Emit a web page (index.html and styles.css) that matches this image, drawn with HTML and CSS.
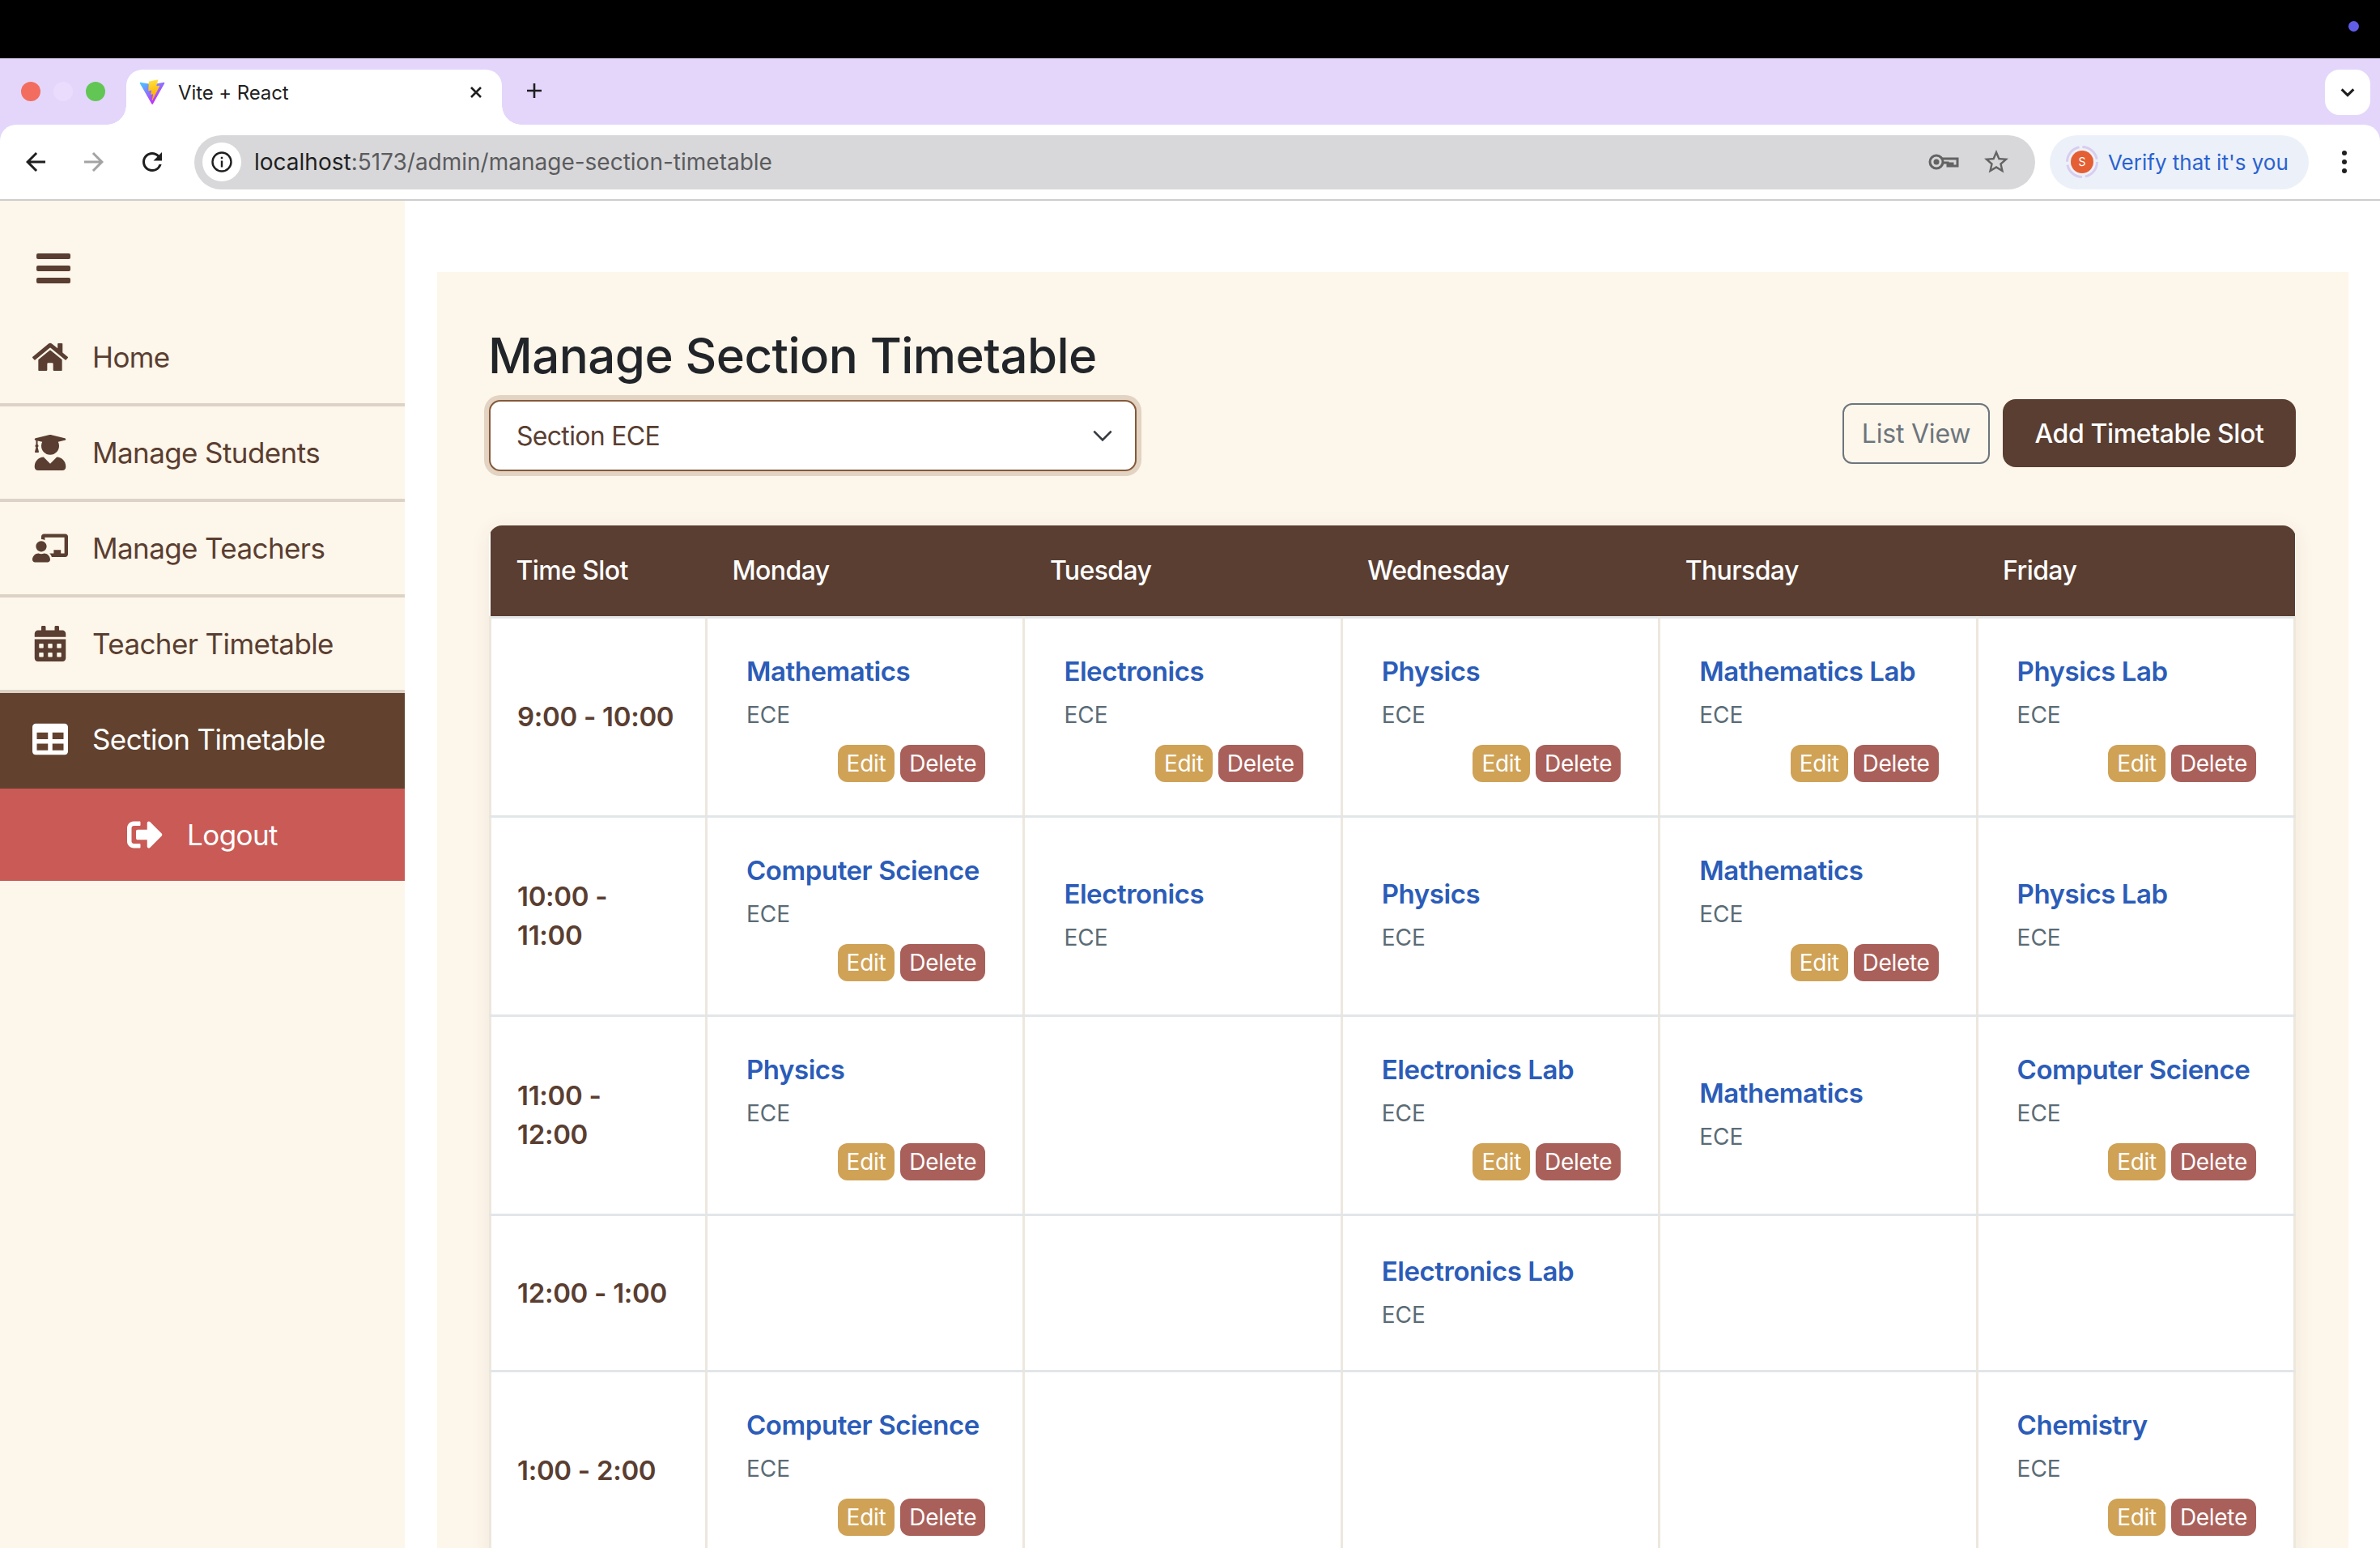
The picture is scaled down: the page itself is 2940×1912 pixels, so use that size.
FILE: index.html
```html
<!DOCTYPE html>
<html lang="en">

<head>
  <meta charset="UTF-8">
  <title>Vite + React</title>
  <link rel="stylesheet" href="styles.css">
</head>

<body>
  <div class="notch-bar"><span class="notch-dot"></span></div>

  <header class="browser">
    <div class="tab-strip">
      <div class="lights">
        <span class="light red"></span>
        <span class="light idle"></span>
        <span class="light green"></span>
      </div>
      <div class="tab">
        <svg class="tab-logo" viewBox="0 0 410 404">
          <defs>
            <linearGradient id="viteA" x1="6" y1="33" x2="235" y2="344" gradientUnits="userSpaceOnUse">
              <stop stop-color="#41D1FF" />
              <stop offset="1" stop-color="#BD34FE" />
            </linearGradient>
            <linearGradient id="viteB" x1="194.65" y1="8.81" x2="236.07" y2="292.99" gradientUnits="userSpaceOnUse">
              <stop stop-color="#FFEA83" />
              <stop offset="0.08" stop-color="#FFDD35" />
              <stop offset="1" stop-color="#FFA800" />
            </linearGradient>
          </defs>
          <path fill="url(#viteA)" d="M399.641 59.5246L215.643 388.545C211.844 395.338 202.084 395.378 198.228 388.618L10.5817 59.5563C6.38087 52.1896 12.6802 43.2665 21.0281 44.7586L205.223 77.6824C206.398 77.8924 207.601 77.8904 208.776 77.6763L389.119 44.8058C397.439 43.2894 403.768 52.1434 399.641 59.5246Z" />
          <path fill="url(#viteB)" d="M292.965 1.5744L156.801 28.2552C154.563 28.6937 152.906 30.5903 152.771 32.8664L144.395 174.33C144.198 177.662 147.258 180.248 150.51 179.498L188.42 170.749C191.967 169.931 195.172 173.055 194.443 176.622L183.18 231.775C182.422 235.487 185.907 238.661 189.532 237.56L212.947 230.446C216.577 229.344 220.065 232.527 219.297 236.242L201.398 322.875C200.278 328.294 207.486 331.249 210.492 326.603L212.5 323.5L323.454 102.072C325.312 98.3645 322.108 94.137 318.036 94.9228L279.014 102.454C275.347 103.161 272.227 99.746 273.262 96.1583L298.731 7.86689C299.767 4.27314 296.636 0.855181 292.965 1.5744Z" />
        </svg>
        <span class="tab-title">Vite + React</span>
        <svg class="tab-close" viewBox="0 0 20 20">
          <path d="M4 4l12 12M16 4L4 16" />
        </svg>
      </div>
      <svg class="new-tab" viewBox="0 0 24 24">
        <path d="M12 3v18M3 12h18" />
      </svg>
      <div class="tab-search">
        <svg viewBox="0 0 24 24">
          <path d="M4 8l8 8 8-8" />
        </svg>
      </div>
    </div>

    <div class="toolbar">
      <svg class="nav-icon" viewBox="0 0 24 24">
        <path d="M20 11H7.83l5.59-5.59L12 4l-8 8 8 8 1.41-1.41L7.83 13H20v-2z" />
      </svg>
      <svg class="nav-icon off" viewBox="0 0 24 24">
        <path d="M4 11h12.17l-5.59-5.59L12 4l8 8-8 8-1.41-1.41L16.17 13H4v-2z" />
      </svg>
      <svg class="nav-icon" viewBox="0 0 24 24">
        <path d="M17.65 6.35A7.958 7.958 0 0 0 12 4c-4.42 0-7.99 3.58-7.99 8s3.57 8 7.99 8c3.73 0 6.84-2.55 7.73-6h-2.08A5.99 5.99 0 0 1 12 18c-3.31 0-6-2.69-6-6s2.69-6 6-6c1.66 0 3.14.69 4.22 1.78L13 11h7V4l-2.35 2.35z" />
      </svg>

      <div class="omnibox">
        <span class="site-info">
          <svg viewBox="0 0 28 28">
            <circle class="ring" cx="14" cy="14" r="11.5" />
            <path class="mark" d="M12.8 12.4h2.4v8h-2.4zM12.8 7.8h2.4v2.4h-2.4z" />
          </svg>
        </span>
        <span class="url"><b>localhost</b>:5173/admin/manage-section-timetable</span>
        <svg class="key" viewBox="0 0 38 22">
          <circle class="key-ring" cx="10" cy="11" r="8" />
          <circle class="key-hole" cx="10" cy="11" r="3.5" />
          <path class="key-ring" d="M17 7h19v9h-6v-3h-3v3h-3v-4h-7" />
        </svg>
        <svg class="star" viewBox="0 0 24 24">
          <path d="M22 9.24l-7.19-.62L12 2 9.19 8.63 2 9.24l5.46 4.73L5.82 21 12 17.27 18.18 21l-1.63-7.03L22 9.24zM12 15.4l-3.76 2.27 1-4.28-3.32-2.88 4.38-.38L12 6.1l1.71 4.04 4.38.38-3.32 2.88 1 4.28L12 15.4z" />
        </svg>
      </div>

      <div class="verify">
        <svg class="avatar" viewBox="0 0 40 40">
          <circle class="avatar-ring" cx="20" cy="20" r="18.5" />
          <circle class="avatar-fill" cx="20" cy="20" r="14" />
          <text class="avatar-letter" x="20" y="25">S</text>
        </svg>
        <span>Verify that it's you</span>
      </div>

      <div class="kebab"><span></span><span></span><span></span></div>
    </div>
  </header>

  <div class="app">
    <aside class="sidebar">
      <div class="burger"><span></span><span></span><span></span></div>

      <nav>
        <a class="nav-item">
          <svg viewBox="0 0 576 512">
            <path d="M280.37 148.26L96 300.11V464a16 16 0 0 0 16 16l112.06-.29a16 16 0 0 0 15.92-16V368a16 16 0 0 1 16-16h64a16 16 0 0 1 16 16v95.64a16 16 0 0 0 16 16.05L464 480a16 16 0 0 0 16-16V300L295.67 148.26a12.19 12.19 0 0 0-15.3 0zM571.6 251.47L488 182.56V44.05a12 12 0 0 0-12-12h-56a12 12 0 0 0-12 12v72.61L318.47 43a48 48 0 0 0-61 0L4.34 251.47a12 12 0 0 0-1.6 16.9l25.5 31A12 12 0 0 0 45.15 301l235.22-193.74a12.19 12.19 0 0 1 15.3 0L530.9 301a12 12 0 0 0 16.9-1.6l25.5-31a12 12 0 0 0-1.7-16.93z" />
          </svg>
          <span>Home</span>
        </a>
        <a class="nav-item">
          <svg viewBox="0 0 448 512">
            <path d="M319.4 320.6L224 416l-95.4-95.4C57.1 323.7 0 382.2 0 454.4v9.6c0 26.5 21.5 48 48 48h352c26.5 0 48-21.5 48-48v-9.6c0-72.2-57.1-130.7-128.6-133.8zM13.6 79.8l6.4 1.5v58.4c-7 4.2-12 11.5-12 20.3 0 8.4 4.6 15.4 11.1 19.7L3.5 242c-1.7 6.9 2.1 14 7.6 14h41.8c5.5 0 9.3-7.1 7.6-14l-15.6-62.3C51.4 175.4 56 168.4 56 160c0-8.8-5-16.1-12-20.3V87.1l66 15.9c-8.6 17.2-14 36.4-14 57 0 70.7 57.3 128 128 128s128-57.3 128-128c0-20.6-5.3-39.8-14-57l96.3-23.2c18.2-4.4 18.2-27.1 0-31.5l-190.4-46c-13-3.1-26.7-3.1-39.7 0L13.6 48.2c-18.1 4.4-18.1 27.2 0 31.6z" />
          </svg>
          <span>Manage Students</span>
        </a>
        <a class="nav-item">
          <svg viewBox="0 0 640 512">
            <path d="M208 352c-2.39 0-4.78.35-7.06 1.09C187.98 357.3 174.35 360 160 360c-14.35 0-27.98-2.7-40.95-6.91-2.28-.74-4.66-1.09-7.05-1.09C49.94 352-.33 402.48 0 464.62.14 490.88 21.73 512 48 512h224c26.27 0 47.86-21.12 48-47.38.33-62.14-49.94-112.62-112-112.62zm-48-32c53.02 0 96-42.98 96-96s-42.98-96-96-96-96 42.98-96 96 42.98 96 96 96zM592 0H208c-26.47 0-48 22.25-48 49.59V96c23.42 0 45.1 6.78 64 17.8V64h352v288h-64v-64H384v64h-76.24c19.1 16.69 33.12 38.73 39.69 64H592c26.47 0 48-22.25 48-49.59V49.59C640 22.25 618.47 0 592 0z" />
          </svg>
          <span>Manage Teachers</span>
        </a>
        <a class="nav-item">
          <svg viewBox="0 0 448 512">
            <path d="M0 464c0 26.5 21.5 48 48 48h352c26.5 0 48-21.5 48-48V192H0v272zm320-196c0-6.6 5.4-12 12-12h40c6.6 0 12 5.4 12 12v40c0 6.6-5.4 12-12 12h-40c-6.6 0-12-5.4-12-12v-40zm0 128c0-6.6 5.4-12 12-12h40c6.6 0 12 5.4 12 12v40c0 6.6-5.4 12-12 12h-40c-6.6 0-12-5.4-12-12v-40zM192 268c0-6.6 5.4-12 12-12h40c6.6 0 12 5.4 12 12v40c0 6.6-5.4 12-12 12h-40c-6.6 0-12-5.4-12-12v-40zm0 128c0-6.6 5.4-12 12-12h40c6.6 0 12 5.4 12 12v40c0 6.6-5.4 12-12 12h-40c-6.6 0-12-5.4-12-12v-40zM64 268c0-6.6 5.4-12 12-12h40c6.6 0 12 5.4 12 12v40c0 6.6-5.4 12-12 12H76c-6.6 0-12-5.4-12-12v-40zm0 128c0-6.6 5.4-12 12-12h40c6.6 0 12 5.4 12 12v40c0 6.6-5.4 12-12 12H76c-6.6 0-12-5.4-12-12v-40zM400 64h-48V16c0-8.8-7.2-16-16-16h-32c-8.8 0-16 7.2-16 16v48H160V16c0-8.8-7.2-16-16-16h-32c-8.8 0-16 7.2-16 16v48H48C21.5 64 0 85.5 0 112v48h448v-48c0-26.5-21.5-48-48-48z" />
          </svg>
          <span>Teacher Timetable</span>
        </a>
        <a class="nav-item active">
          <svg viewBox="0 0 512 512">
            <path d="M464 32H48C21.49 32 0 53.49 0 80v352c0 26.51 21.49 48 48 48h416c26.51 0 48-21.49 48-48V80c0-26.51-21.49-48-48-48zM224 416H64v-96h160v96zm0-160H64v-96h160v96zm224 160H288v-96h160v96zm0-160H288v-96h160v96z" />
          </svg>
          <span>Section Timetable</span>
        </a>
      </nav>

      <a class="logout">
        <svg viewBox="0 0 512 512">
          <path d="M497 273L329 441c-15 15-41 4.5-41-17v-96H152c-13.3 0-24-10.7-24-24v-96c0-13.3 10.7-24 24-24h136V88c0-21.4 25.9-32 41-17l168 168c9.3 9.4 9.3 24.6 0 34zM192 436v-40c0-6.6-5.4-12-12-12H96c-17.7 0-32-14.3-32-32V160c0-17.7 14.3-32 32-32h84c6.6 0 12-5.4 12-12V76c0-6.6-5.4-12-12-12H96c-53 0-96 43-96 96v192c0 53 43 96 96 96h84c6.6 0 12-5.4 12-12z" />
        </svg>
        <span>Logout</span>
      </a>
    </aside>

    <main class="content">
      <section class="panel">
        <h1>Manage Section Timetable</h1>

        <div class="controls">
          <div class="select-wrap">
            <select class="section-select">
              <option>Section ECE</option>
            </select>
            <svg class="select-arrow" viewBox="0 0 24 24">
              <path d="M4 8l8 8 8-8" />
            </svg>
          </div>
          <div class="control-btns">
            <button class="btn-list">List View</button>
            <button class="btn-add">Add Timetable Slot</button>
          </div>
        </div>

        <div class="table-wrap">
          <table class="timetable">
            <thead>
              <tr>
                <th class="time-col">Time Slot</th>
                <th>Monday</th>
                <th>Tuesday</th>
                <th>Wednesday</th>
                <th>Thursday</th>
                <th>Friday</th>
              </tr>
            </thead>
            <tbody>
              <tr>
                <td class="time">9:00 - 10:00</td>
                <td>
                  <div class="slot">
                    <div class="subject">Mathematics</div>
                    <div class="section">ECE</div>
                    <div class="actions"><button class="btn-edit">Edit</button><button class="btn-delete">Delete</button></div>
                  </div>
                </td>
                <td>
                  <div class="slot">
                    <div class="subject">Electronics</div>
                    <div class="section">ECE</div>
                    <div class="actions"><button class="btn-edit">Edit</button><button class="btn-delete">Delete</button></div>
                  </div>
                </td>
                <td>
                  <div class="slot">
                    <div class="subject">Physics</div>
                    <div class="section">ECE</div>
                    <div class="actions"><button class="btn-edit">Edit</button><button class="btn-delete">Delete</button></div>
                  </div>
                </td>
                <td>
                  <div class="slot">
                    <div class="subject">Mathematics Lab</div>
                    <div class="section">ECE</div>
                    <div class="actions"><button class="btn-edit">Edit</button><button class="btn-delete">Delete</button></div>
                  </div>
                </td>
                <td>
                  <div class="slot">
                    <div class="subject">Physics Lab</div>
                    <div class="section">ECE</div>
                    <div class="actions"><button class="btn-edit">Edit</button><button class="btn-delete">Delete</button></div>
                  </div>
                </td>
              </tr>
              <tr>
                <td class="time">10:00 - 11:00</td>
                <td>
                  <div class="slot">
                    <div class="subject">Computer Science</div>
                    <div class="section">ECE</div>
                    <div class="actions"><button class="btn-edit">Edit</button><button class="btn-delete">Delete</button></div>
                  </div>
                </td>
                <td>
                  <div class="slot">
                    <div class="subject">Electronics</div>
                    <div class="section">ECE</div>
                  </div>
                </td>
                <td>
                  <div class="slot">
                    <div class="subject">Physics</div>
                    <div class="section">ECE</div>
                  </div>
                </td>
                <td>
                  <div class="slot">
                    <div class="subject">Mathematics</div>
                    <div class="section">ECE</div>
                    <div class="actions"><button class="btn-edit">Edit</button><button class="btn-delete">Delete</button></div>
                  </div>
                </td>
                <td>
                  <div class="slot">
                    <div class="subject">Physics Lab</div>
                    <div class="section">ECE</div>
                  </div>
                </td>
              </tr>
              <tr>
                <td class="time">11:00 - 12:00</td>
                <td>
                  <div class="slot">
                    <div class="subject">Physics</div>
                    <div class="section">ECE</div>
                    <div class="actions"><button class="btn-edit">Edit</button><button class="btn-delete">Delete</button></div>
                  </div>
                </td>
                <td></td>
                <td>
                  <div class="slot">
                    <div class="subject">Electronics Lab</div>
                    <div class="section">ECE</div>
                    <div class="actions"><button class="btn-edit">Edit</button><button class="btn-delete">Delete</button></div>
                  </div>
                </td>
                <td>
                  <div class="slot">
                    <div class="subject">Mathematics</div>
                    <div class="section">ECE</div>
                  </div>
                </td>
                <td>
                  <div class="slot">
                    <div class="subject">Computer Science</div>
                    <div class="section">ECE</div>
                    <div class="actions"><button class="btn-edit">Edit</button><button class="btn-delete">Delete</button></div>
                  </div>
                </td>
              </tr>
              <tr>
                <td class="time">12:00 - 1:00</td>
                <td></td>
                <td></td>
                <td>
                  <div class="slot">
                    <div class="subject">Electronics Lab</div>
                    <div class="section">ECE</div>
                  </div>
                </td>
                <td></td>
                <td></td>
              </tr>
              <tr>
                <td class="time">1:00 - 2:00</td>
                <td>
                  <div class="slot">
                    <div class="subject">Computer Science</div>
                    <div class="section">ECE</div>
                    <div class="actions"><button class="btn-edit">Edit</button><button class="btn-delete">Delete</button></div>
                  </div>
                </td>
                <td></td>
                <td></td>
                <td></td>
                <td>
                  <div class="slot">
                    <div class="subject">Chemistry</div>
                    <div class="section">ECE</div>
                    <div class="actions"><button class="btn-edit">Edit</button><button class="btn-delete">Delete</button></div>
                  </div>
                </td>
              </tr>
            </tbody>
          </table>
        </div>
      </section>
    </main>
  </div>
</body>

</html>
```

FILE: styles.css
```css
* {
  box-sizing: border-box;
}

html,
body {
  height: 1912px;
  margin: 0;
  overflow: hidden;
}

body {
  font-family: 'Inter', 'Liberation Sans', sans-serif;
  background-color: #ffffff;
  color: #5a3e31;
}

/* top of the screen */
.notch-bar {
  display: flex;
  justify-content: flex-end;
  height: 72px;
  padding: 26px 26px 0 0;
  background-color: #000000;
}

.notch-dot {
  width: 13px;
  height: 13px;
  border-radius: 50%;
  background-color: #625de8;
}

/* browser */
.browser {
  background-color: #e4d6fb;
}

.tab-strip {
  display: flex;
  align-items: flex-start;
  height: 82px;
  padding-top: 14px;
}

.lights {
  display: flex;
  gap: 16px;
  width: 156px;
  padding: 15px 0 0 26px;
}

.light {
  width: 24px;
  height: 24px;
  border-radius: 50%;
}

.red {
  background-color: #f26d60;
}

.idle {
  background-color: #e9dcfc;
}

.green {
  background-color: #62c655;
}

.tab {
  position: relative;
  display: flex;
  align-items: center;
  width: 464px;
  height: 68px;
  padding: 0 22px 12px 16px;
  border-radius: 20px 20px 0 0;
  background-color: #ffffff;
}

.tab::before,
.tab::after {
  content: '';
  position: absolute;
  bottom: 0;
  width: 24px;
  height: 24px;
}

.tab::before {
  left: -24px;
  background: radial-gradient(circle at 0 0, transparent 23.5px, #ffffff 24px);
}

.tab::after {
  right: -24px;
  background: radial-gradient(circle at 100% 0, transparent 23.5px, #ffffff 24px);
}

.tab-logo {
  width: 32px;
  height: 32px;
  margin-right: 16px;
}

.tab-title {
  flex-grow: 1;
  font-size: 24px;
  letter-spacing: -0.1px;
  color: #1f1f1f;
}

.tab-close {
  width: 20px;
  height: 20px;
  fill: none;
  stroke: #1f1f1f;
  stroke-width: 2.6;
}

.new-tab {
  width: 24px;
  height: 24px;
  margin: 14px 0 0 28px;
  fill: none;
  stroke: #1f1f1f;
  stroke-width: 2.6;
}

.tab-search {
  display: flex;
  align-items: center;
  justify-content: center;
  width: 56px;
  height: 56px;
  margin: 0 12px 0 auto;
  border-radius: 18px;
  background-color: #ffffff;
}

.tab-search svg {
  width: 22px;
  height: 22px;
  fill: none;
  stroke: #1f1f1f;
  stroke-width: 3.4;
}

.toolbar {
  display: flex;
  align-items: center;
  height: 94px;
  padding: 0 0 0 26px;
  border-radius: 20px 20px 0 0;
  border-bottom: 2px solid #cdcdcd;
  background-color: #ffffff;
}

.nav-icon {
  width: 36px;
  height: 36px;
  margin-right: 36px;
  fill: #1f1f1f;
}

.nav-icon.off {
  fill: #a3a3a3;
}

.omnibox {
  display: flex;
  align-items: center;
  width: 2274px;
  height: 67px;
  margin-left: -2px;
  padding: 0 30px 0 10px;
  border-radius: 34px;
  background-color: #d8d8da;
}

.site-info {
  display: flex;
  align-items: center;
  justify-content: center;
  width: 48px;
  height: 48px;
  border-radius: 50%;
  background-color: #ffffff;
}

.site-info svg {
  width: 28px;
  height: 28px;
}

.ring {
  fill: none;
  stroke: #1f1f1f;
  stroke-width: 2.4;
}

.mark {
  fill: #1f1f1f;
}

.url {
  flex-grow: 1;
  margin-left: 16px;
  font-size: 28px;
  color: #5b5b5e;
}

.url b {
  font-weight: 400;
  color: #1f1f1f;
}

.key {
  width: 38px;
  height: 22px;
  margin-right: 28px;
}

.key-ring {
  fill: none;
  stroke: #636363;
  stroke-width: 3;
}

.key-hole {
  fill: #636363;
}

.star {
  width: 36px;
  height: 36px;
  fill: #636363;
}

.verify {
  display: flex;
  align-items: center;
  width: 320px;
  height: 67px;
  margin-left: 18px;
  padding-left: 20px;
  border-radius: 34px;
  font-size: 26px;
  color: #2a62d0;
  background-color: #ecf1f9;
}

.avatar {
  width: 40px;
  height: 40px;
  margin-right: 12px;
}

.avatar-ring {
  fill: none;
  stroke: #d8cdf0;
  stroke-width: 3;
  stroke-dasharray: 25 4;
}

.avatar-fill {
  fill: #e45f33;
}

.avatar-letter {
  font-size: 14px;
  text-anchor: middle;
  fill: #ffffff;
}

.kebab {
  display: flex;
  flex-direction: column;
  gap: 5px;
  margin-left: 41px;
}

.kebab span {
  width: 6px;
  height: 6px;
  border-radius: 50%;
  background-color: #1f1f1f;
}

/* app */
.app {
  display: flex;
  height: 1664px;
  overflow: hidden;
}

.sidebar {
  flex: 0 0 500px;
  background-color: #fdf6ea;
}

.burger {
  display: flex;
  flex-direction: column;
  gap: 8px;
  height: 136px;
  padding: 65px 0 0 45px;
}

.burger span {
  width: 42px;
  height: 7px;
  border-radius: 2px;
  background-color: #5a3e31;
}

.nav-item {
  display: flex;
  align-items: center;
  height: 118px;
  padding-left: 40px;
  border-bottom: 4px solid #ddd2c6;
  font-size: 35px;
  letter-spacing: -0.6px;
  color: #5a3e31;
}

.nav-item svg {
  flex-shrink: 0;
  width: 44px;
  height: 44px;
  margin-right: 30px;
  fill: #5a3e31;
}

.nav-item.active {
  padding-bottom: 4px;
  border-bottom: 0;
  color: #ffffff;
  background-color: #62422e;
}

.nav-item.active svg {
  fill: #ffffff;
}

.logout {
  display: flex;
  align-items: center;
  justify-content: center;
  gap: 30px;
  height: 114px;
  font-size: 35px;
  letter-spacing: -0.6px;
  color: #ffffff;
  background-color: #c95a55;
}

.logout svg {
  width: 44px;
  height: 44px;
  fill: #ffffff;
}

.content {
  flex-grow: 1;
  padding: 88px 39px 0 40px;
}

.panel {
  height: 1800px;
  padding: 67px 65px 0 64px;
  background-color: #fdf6ea;
}

h1 {
  margin: 0 0 18px -1px;
  font-size: 60px;
  font-weight: 500;
  line-height: 72px;
  letter-spacing: -0.55px;
  color: #212529;
}

.controls {
  display: flex;
  align-items: center;
  justify-content: space-between;
  margin-bottom: 66px;
}

.select-wrap {
  position: relative;
  width: 800px;
}

.section-select {
  display: block;
  width: 100%;
  height: 88px;
  padding: 0 32px;
  border: 2px solid #85593a;
  border-radius: 14px;
  font-family: inherit;
  font-size: 32px;
  letter-spacing: -0.7px;
  color: #5a3e31;
  background-color: #ffffff;
  box-shadow: 0 0 0 6px #e2d3c2;
  appearance: none;
}

.select-arrow {
  position: absolute;
  top: 28px;
  right: 26px;
  width: 32px;
  height: 32px;
  fill: none;
  stroke: #343a40;
  stroke-width: 2;
}

.control-btns {
  display: flex;
  align-items: center;
  gap: 16px;
  margin-bottom: 6px;
}

button {
  font-family: inherit;
  cursor: pointer;
}

.btn-list {
  width: 182px;
  height: 75px;
  border: 2px solid #6c757d;
  border-radius: 12px;
  font-size: 32px;
  letter-spacing: -0.2px;
  color: #6c757d;
  background-color: transparent;
}

.btn-add {
  width: 362px;
  height: 84px;
  border: 0;
  border-radius: 16px;
  font-size: 32px;
  font-weight: 500;
  letter-spacing: -0.4px;
  color: #ffffff;
  background-color: #5a3e31;
}

.table-wrap {
  border-radius: 16px 16px 0 0;
  overflow: hidden;
  background-color: #ffffff;
  box-shadow: 0 4px 24px rgba(90, 62, 49, 0.08);
}

.timetable {
  width: 100%;
  border-collapse: collapse;
  table-layout: fixed;
}

.timetable th {
  height: 113px;
  padding: 0 32px;
  font-size: 32px;
  font-weight: 500;
  letter-spacing: -0.6px;
  text-align: left;
  color: #ffffff;
  background-color: #5a3e31;
}

.time-col {
  width: 267px;
}

.timetable td {
  height: 193px;
  padding: 24.5px 32px;
  border: 3px solid #ede7dd;
  border-bottom-color: #e2e6e8;
  border-top-color: #e2e6e8;
  vertical-align: middle;
}

.timetable td.time {
  padding-right: 37px;
  font-size: 33px;
  font-weight: 600;
  line-height: 48px;
  letter-spacing: -0.3px;
  color: #5a3e31;
}

.slot {
  padding: 16px 14px 16px 16px;
}

.subject {
  font-size: 33px;
  font-weight: 600;
  line-height: 50px;
  letter-spacing: -0.45px;
  white-space: nowrap;
  color: #2b5cb8;
}

.section {
  margin-top: 4px;
  font-size: 28px;
  line-height: 50px;
  color: #5a6b75;
}

.actions {
  display: flex;
  justify-content: flex-end;
  gap: 7px;
  margin-top: 12px;
}

.actions button {
  height: 46px;
  padding: 0 11px;
  border: 0;
  border-radius: 12px;
  font-size: 28px;
  letter-spacing: -0.3px;
  color: #ffffff;
}

.btn-edit {
  background-color: #cfa256;
}

.btn-delete {
  background-color: #a9605a;
}
```
